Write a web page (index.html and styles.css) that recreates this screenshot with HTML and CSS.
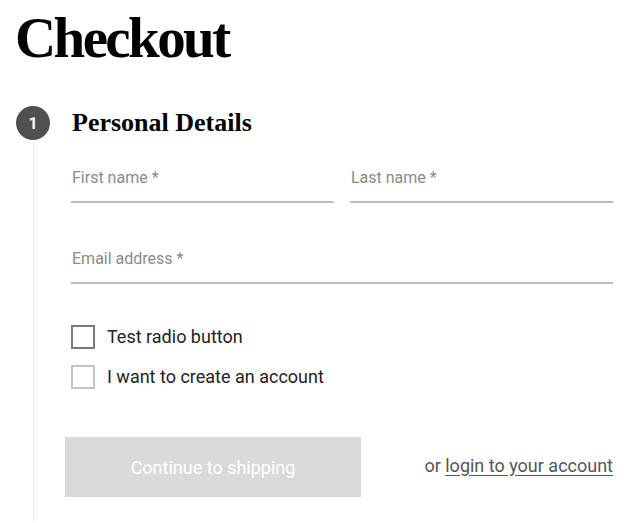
FILE: index.html
```html
<!DOCTYPE html>
<html lang="en">
<head>
<meta charset="utf-8">
<title>Checkout</title>
<link rel="stylesheet" href="styles.css">
</head>
<body>
<main class="page">
  <h1 class="title">Checkout</h1>
  <section class="step">
    <div class="rail">
      <div class="badge">1</div>
      <div class="line"></div>
    </div>
    <div class="content">
      <h2 class="step-title">Personal Details</h2>
      <div class="row two">
        <label class="field"><span class="label">First name *</span></label>
        <label class="field"><span class="label">Last name *</span></label>
      </div>
      <div class="row">
        <label class="field"><span class="label">Email address *</span></label>
      </div>
      <div class="checks">
        <label class="check"><span class="box dark"></span><span>Test radio button</span></label>
        <label class="check"><span class="box"></span><span>I want to create an account</span></label>
      </div>
      <div class="actions">
        <button class="btn" type="button">Continue to shipping</button>
        <p class="alt">or <a href="#">login to your account</a></p>
      </div>
    </div>
  </section>
</main>
</body>
</html>
```
FILE: styles.css
```css
* { box-sizing: border-box; }
html, body { margin: 0; padding: 0; background: #fff; }
body { font-family: Roboto, "Noto Sans", sans-serif; color: #222; }
.page { padding: 0 23px 0 16px; }
.title {
  margin: 0 0 0 -1px;
  padding-top: 6px;
  font-family: "Liberation Serif", serif;
  font-weight: 700;
  font-size: 57px;
  line-height: 64px;
  letter-spacing: -2.6px;
  color: #000;
}
.step {
  display: grid;
  grid-template-columns: 34px 1fr;
  column-gap: 21px;
  margin-top: 36px;
}
.rail { display: flex; flex-direction: column; align-items: center; }
.badge {
  width: 34px; height: 34px; border-radius: 50%;
  background: #505050; color: #fff;
  display: flex; align-items: center; justify-content: center;
  font-size: 16px; font-weight: 700;
}
.line { width: 1px; flex: 1; background: #ebebeb; }
.content { padding-bottom: 25px; }
.step-title {
  margin: 0;
  font-family: "Liberation Serif", serif;
  font-weight: 700;
  font-size: 26px;
  line-height: 34px;
  color: #000;
  padding-left: 1px;
}
.row { display: flex; gap: 16px; }
.row.two { margin-top: 20px; }
.row + .row { margin-top: 38px; }
.field {
  flex: 1;
  display: block;
  height: 43px;
  border-bottom: 2px solid #bdbdbd;
  padding-top: 8px;
}
.label { font-size: 16px; color: #8a8a8a; line-height: 20px; padding-left: 1px; }
.checks { margin-top: 41px; display: flex; flex-direction: column; gap: 16px; }
.check { display: flex; align-items: center; gap: 12px; font-size: 18px; color: #222; line-height: 24px; }
.box { width: 24px; height: 24px; border: 2px solid #c4c4c4; background: #fff; }
.box.dark { border-color: #7a7a7a; }
.actions {
  margin-top: 48px;
  margin-left: -6px;
  display: flex; align-items: center; justify-content: space-between;
}
.btn {
  width: 296px; height: 60px;
  border: 0; background: #d9d9d9; color: #fff;
  font-family: Roboto, sans-serif; font-size: 18px;
  padding: 0;
}
.alt { margin: 0 0 4px; font-size: 18px; color: #555; }
.alt a { color: #555; text-decoration: underline; text-underline-offset: 3px; }
```
